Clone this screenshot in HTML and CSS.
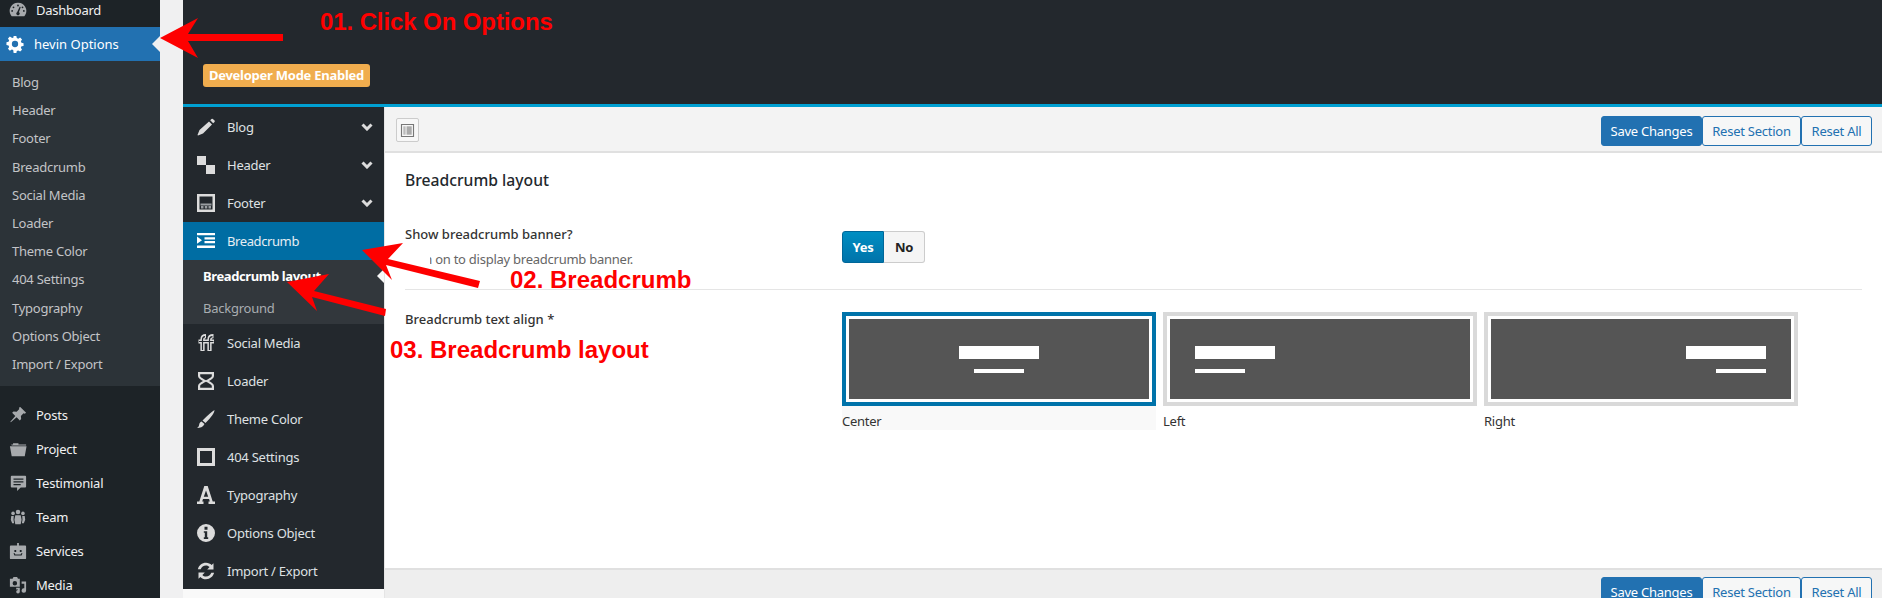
FILE: index.html
```html
<!DOCTYPE html>
<html lang="en">
<head>
<meta charset="utf-8">
<title>hevin Options</title>
<link rel="stylesheet" href="styles.css">
</head>
<body>
<div class="app">
  <aside class="wp">
    <div class="wp-row wp-dash">
      <svg class="wp-ico" viewBox="0 0 20 20"><path d="M10 2a9 9 0 0 0-8 13.500l1 1.500h14l1-1.500A9 9 0 0 0 10 2zm0 2a1 1 0 1 1 0 2 1 1 0 0 1 0-2zM5 6a1 1 0 1 1 0 2 1 1 0 0 1 0-2zm10 0a1 1 0 1 1 0 2 1 1 0 0 1 0-2zM3.500 10a1 1 0 1 1 0 2 1 1 0 0 1 0-2zm13 0a1 1 0 1 1 0 2 1 1 0 0 1 0-2zM13 7l-2 5.500a1.800 1.800 0 1 1-2 0L12 6z" fill-rule="evenodd"/></svg>
      <span>Dashboard</span>
    </div>
    <div class="wp-current">
      <svg class="wp-gear" viewBox="0 0 20 20"><path d="M8.500 1h3l.5 2.400 1.600.7 2.100-1.300 2.100 2.100-1.300 2.100.7 1.600 2.300.5v3l-2.300.5-.7 1.600 1.300 2.100-2.100 2.100-2.100-1.300-1.600.7-.5 2.400h-3L8 16.800l-1.600-.7-2.100 1.300-2.100-2.100 1.300-2.100-.7-1.600L.5 11.100v-3L2.800 7.600l.7-1.600-1.300-2.100 2.100-2.100 2.100 1.300L8 3.400zM10 6.500a3.500 3.500 0 1 0 0 7 3.500 3.500 0 0 0 0-7z" fill-rule="evenodd"/></svg>
      <span>hevin Options</span>
      <i class="notch"></i>
    </div>
    <ul class="wp-sub">
      <li>Blog</li><li>Header</li><li>Footer</li><li>Breadcrumb</li><li>Social Media</li><li>Loader</li><li>Theme Color</li><li>404 Settings</li><li>Typography</li><li>Options Object</li><li>Import / Export</li>
    </ul>
    <div class="wp-menu">
      <div class="wp-row">
        <svg class="wp-ico" viewBox="0 0 20 20"><path d="M12.500 1l6.500 6.500-1.500 1-1.300-.5-3 3 .3 3.500-1.500 1.500-3.500-3.500L2 18l-.5-.5 5.500-6.500L3.500 7.500 5 6l3.500.3 3-3-.5-1.300z"/></svg>
        <span>Posts</span>
      </div>
      <div class="wp-row">
        <svg class="wp-ico" viewBox="0 0 20 20"><path d="M2 5h2.500V3.500h6V5H19v1H3l-.5-1zM1 7h18.500l-2 11H3z"/></svg>
        <span>Project</span>
      </div>
      <div class="wp-row">
        <svg class="wp-ico" viewBox="0 0 20 20"><path d="M3 2h15a1 1 0 0 1 1 1v11a1 1 0 0 1-1 1h-5l-4 4v-4H3a1 1 0 0 1-1-1V3a1 1 0 0 1 1-1zm2 3v1.500h11V5zm0 3v1.500h11V8zm0 3v1.500h8V11z" fill-rule="evenodd"/></svg>
        <span>Testimonial</span>
      </div>
      <div class="wp-row">
        <svg class="wp-ico" viewBox="0 0 20 20"><circle cx="10" cy="4.500" r="2.500"/><circle cx="4.500" cy="6" r="2"/><circle cx="15.500" cy="6" r="2"/><path d="M7 8h6l1 5-1 5H7l-1-5zM2.500 9h2.800L5 13l.7 4H3.500L2 13zM14.700 9h2.800l.5 4-1.500 4h-2.200l.7-4z"/></svg>
        <span>Team</span>
      </div>
      <div class="wp-row">
        <svg class="wp-ico" viewBox="0 0 20 20"><path d="M9 1h2v3h7a1 1 0 0 1 1 1v13a1 1 0 0 1-1 1H2a1 1 0 0 1-1-1V5a1 1 0 0 1 1-1h7zM6 9v2h2V9zm6 0v2h2V9zm-7 3.500L6 15h8l1-2.500h-1.500L13 14H7l-.5-1.500z" fill-rule="evenodd"/></svg>
        <span>Services</span>
      </div>
      <div class="wp-row">
        <svg class="wp-ico" viewBox="0 0 20 20"><path d="M1 3h3l1-2h4l1 2h2v9H1zm5.500 2.500a2.500 2.500 0 1 0 0 5 2.500 2.500 0 0 0 0-5zM14 6h5v10a2.500 2.500 0 1 1-2-2.400V8.500h-3zM8 13h4v4.500a2 2 0 1 1-2-2V15H8z" fill-rule="evenodd"/></svg>
        <span>Media</span>
      </div>
    </div>
  </aside>

  <div class="gutter"></div>

  <section class="panel">
    <header class="panel-head">
      <span class="badge">Developer Mode Enabled</span>
    </header>
    <div class="panel-body">
      <nav class="rnav">
        <div class="rrow">
          <svg class="ric" viewBox="0 0 18 18"><path d="M12 3.500l3 3L6 15.500 1 17.500l-.5-.5 2-5zM13.200 2.300l1.300-1.300a1 1 0 0 1 1.400 0l1.600 1.600a1 1 0 0 1 0 1.400l-1.300 1.300z"/></svg>
          <span>Blog</span>
          <svg class="chev" viewBox="0 0 12 8"><path d="M1.500 1.500L6 6l4.500-4.500" /></svg>
        </div>
        <div class="rrow">
          <svg class="ric" viewBox="0 0 18 18"><path d="M0 0h9v9H0z"/><path d="M9 9h9v9H9z"/></svg>
          <span>Header</span>
          <svg class="chev" viewBox="0 0 12 8"><path d="M1.500 1.500L6 6l4.500-4.500" /></svg>
        </div>
        <div class="rrow">
          <svg class="ric" viewBox="0 0 18 18"><path d="M0 0h18v18H0zM2.500 2.500v13h13v-13z" fill-rule="evenodd"/><path d="M3.500 9.500h11v2h-11zM4 12h2.500v2.500H4zM7.800 12h2.500v2.500H7.800zM11.500 12H14v2.500h-2.500z" fill="#9a9ea2"/></svg>
          <span>Footer</span>
          <svg class="chev" viewBox="0 0 12 8"><path d="M1.500 1.500L6 6l4.500-4.500" /></svg>
        </div>
        <div class="rrow active">
          <svg class="ric" viewBox="0 0 18 18"><path d="M0 1h18v2.300H0zM7.500 5.200H18v2.200H7.500zM7.500 9H18v2.200H7.500zM0 13.500h18v2.400H0zM0 4.500l5 3.700-5 3.600z"/></svg>
          <span>Breadcrumb</span>
        </div>
        <div class="rsub">
          <div class="rsub-item on">Breadcrumb layout<i class="notch small"></i></div>
          <div class="rsub-item">Background</div>
        </div>
        <div class="rrow">
          <svg class="ric" viewBox="0 0 18 18"><g class="ff-out"><path d="M5.500 17V5.500Q5.500 2.200 9 2.200M1.500 7.500H9M12.500 17V5.500Q12.500 2.200 16.500 2.200M8.500 7.500h8.500"/></g><g class="ff-in"><path d="M5.500 16V5.500Q5.500 2.800 8 2.600M12.500 16V5.500Q12.500 2.800 15.500 2.600M2 7.500h7M9 7.500h7.500"/></g></svg>
          <span>Social Media</span>
        </div>
        <div class="rrow">
          <svg class="ric" viewBox="0 0 18 18"><path d="M1 0h16v4c0 2.200-2.700 3.600-5 5 2.300 1.400 5 2.800 5 5v4H1v-4c0-2.200 2.700-3.600 5-5C3.700 7.600 1 6.200 1 4zm2.200 2.200V4c0 1 3 2.900 5.800 4.300C11.800 6.900 14.800 5 14.800 4V2.200zM9 9.800C6.200 11.200 3.200 13 3.200 14v1.800h11.600V14C14.800 13 11.800 11.200 9 9.800z" fill-rule="evenodd"/></svg>
          <span>Loader</span>
        </div>
        <div class="rrow">
          <svg class="ric" viewBox="0 0 18 18"><path d="M17.500 0c-.3 3-2.500 6.500-9 13l-3-2.500C11 5 15 1.500 17.500 0zM4.500 11.500l3 2.500C6 17 3 18 0 18c1.500-1 2-2 2.200-3.500.2-1.500 1-2.500 2.300-3z"/></svg>
          <span>Theme Color</span>
        </div>
        <div class="rrow">
          <svg class="ric" viewBox="0 0 18 18"><path d="M0 0h18v18H0zM3 3v12h12V3z" fill-rule="evenodd"/></svg>
          <span>404 Settings</span>
        </div>
        <div class="rrow">
          <svg class="ric" viewBox="0 0 18 18"><path d="M7.300 0h3.400l5 15.500H18V18h-6.500v-2.500h1.300l-.7-2.500H6l-.8 2.500h1.300V18H0v-2.500h2.300zM9 4.500l-2.200 6.200h4.400z" fill-rule="evenodd"/></svg>
          <span>Typography</span>
        </div>
        <div class="rrow">
          <svg class="ric" viewBox="0 0 18 18"><path d="M9 0a9 9 0 1 1 0 18A9 9 0 0 1 9 0zM7.500 2.800v2.900h3V2.800zM6.800 7.200v1.600h1v4.500h-1v1.600h4.400v-1.600h-1V7.200z" fill-rule="evenodd"/></svg>
          <span>Options Object</span>
        </div>
        <div class="rrow">
          <svg class="ric" viewBox="0 0 18 18"><path d="M9 .8c2.300 0 4.200.9 5.600 2.300L16.500 1.200V7.500h-6.300l2.400-2.400C11.700 4.100 10.400 3.500 9 3.500 6.500 3.500 4.500 5 3.700 7.200H.9C1.800 3.500 5 .8 9 .8zM1.500 10.500h6.300l-2.400 2.400c.9 1 2.200 1.600 3.600 1.600 2.500 0 4.500-1.500 5.300-3.700h2.800c-.9 3.700-4.100 6.400-8.100 6.400-2.300 0-4.200-.9-5.600-2.300L1.500 16.800z"/></svg>
          <span>Import / Export</span>
        </div>
      </nav>

      <main class="main">
        <div class="bar">
          <span class="expand">
            <svg viewBox="0 0 16 16"><path d="M1 1h14v14H1zM2.200 2.200v11.600h11.600V2.200z" fill="#777" fill-rule="evenodd"/><path d="M3.500 3.500h2.500v9H3.500z" fill="#bbb"/><path d="M7 3.500h5.500v9H7z" fill="#aaa"/></svg>
          </span>
          <div class="btns">
            <button class="btn primary">Save Changes</button><button class="btn">Reset Section</button><button class="btn">Reset All</button>
          </div>
        </div>

        <div class="content">
          <h2 class="title">Breadcrumb layout</h2>
          <div class="field first">
            <div class="field-label">
              <div class="label">Show breadcrumb banner?</div>
              <div class="desc">Turn on to display breadcrumb banner.</div>
            </div>
            <div class="toggle"><span class="yes">Yes</span><span class="no">No</span></div>
          </div>
          <div class="field second">
            <div class="field-label">
              <div class="label">Breadcrumb text align *</div>
            </div>
            <div class="options">
              <div class="opt selected">
                <div class="frame"><div class="img center"><b></b><u></u></div></div>
                <div class="cap">Center</div>
              </div>
              <div class="opt">
                <div class="frame"><div class="img left"><b></b><u></u></div></div>
                <div class="cap">Left</div>
              </div>
              <div class="opt">
                <div class="frame"><div class="img right"><b></b><u></u></div></div>
                <div class="cap">Right</div>
              </div>
            </div>
          </div>
        </div>

        <div class="bar bottom">
          <div class="btns">
            <button class="btn primary">Save Changes</button><button class="btn">Reset Section</button><button class="btn">Reset All</button>
          </div>
        </div>
      </main>
    </div>
  </section>
</div>

<svg class="arrows" viewBox="0 0 1882 598">
  <path class="erase" d="M404 250h26v17h-26z"/>
  <path d="M160 38L198 18 188 34H283V41H188L198 58z"/>
  <path d="M362 250L403 243 388 259 480 281 478 288 386 265 392 280z"/>
  <path d="M287 282L329 274 314 291 386 309 385 316 312 297 317 311z"/>
</svg>
<div class="note n1">01. Click On Options</div>
<div class="note n2">02. Breadcrumb</div>
<div class="note n3">03. Breadcrumb layout</div>
</body>
</html>
```
FILE: styles.css
```css
* { box-sizing: border-box; }
html, body { margin: 0; height: 598px; overflow: hidden; }
body {
  position: relative;
  background: #f0f0f1;
  font-family: "Noto Sans", "Open Sans", sans-serif;
  font-size: 13px;
  letter-spacing: -0.25px;
  color: #23282d;
}
.app { display: flex; height: 598px; overflow: hidden; }

/* WordPress sidebar */
.wp { width: 160px; flex: none; background: #1d2327; color: #f0f0f1; }
.wp-row { display: flex; align-items: center; height: 34px; padding-left: 10px; gap: 9px; }
.wp-dash { height: 27px; padding-bottom: 7px; align-items: flex-end; }
.wp-dash span { line-height: 20px; }
.wp-ico { width: 18px; height: 18px; fill: #a7aaad; flex: none; margin-left: -1px; }
.wp-dash .wp-ico { margin-bottom: 1px; }
.wp-current { position: relative; display: flex; align-items: center; height: 34px; background: #2271b1; color: #fff; padding-left: 6px; gap: 10px; }
.wp-current span { letter-spacing: 0; }
.wp-gear { width: 18px; height: 18px; fill: #fff; }
.notch { position: absolute; right: 0; top: 50%; margin-top: -8px; width: 0; height: 0; border: 8px solid transparent; border-right-color: #f0f0f1; border-left-width: 0; }
.wp-sub { list-style: none; margin: 0 0 12px; padding: 7px 0 8px; background: #2c3338; color: #c3c4c7; }
.wp-sub li { height: 28.2px; line-height: 28px; padding-left: 12px; }

.gutter { width: 23px; flex: none; }

/* Options panel */
.panel { flex: 1; min-width: 0; display: flex; flex-direction: column; background: #fff; }
.panel-head { height: 107px; flex: none; background: #23282d; border-bottom: 3px solid #00a0d2; padding: 64px 0 0 20px; }
.badge { display: block; width: 167px; height: 23px; line-height: 23px; text-align: center; background: #f0ad4e; color: #fff; font-weight: 700; font-size: 13px; border-radius: 3px; white-space: nowrap; }
.panel-body { flex: 1; display: flex; min-height: 0; background: #f9f9f9; }

.rnav { width: 201px; flex: none; height: 482px; padding-top: 1px; background: #23282d; color: #dfe1e3; }
.rrow { display: flex; align-items: center; height: 38px; padding-left: 14px; position: relative; }
.rrow span { margin-left: 12px; }
.ric { width: 18px; height: 18px; fill: #dcdcdc; flex: none; }
.chev { position: absolute; left: 178px; top: 15px; width: 12px; height: 8px; fill: none; stroke: #dcdcdc; stroke-width: 3; }
.ff-out { fill: none; stroke: #dcdcdc; stroke-width: 4.200; }
.ff-in { fill: none; stroke: #23282d; stroke-width: 1.200; }
.rrow.active { background: #006da3; color: #e6eef3; }
.rrow.active span { letter-spacing: -0.4px; }
.rrow.active .ric { fill: #fff; }
.rsub { background: #32373c; height: 64px; }
.rsub-item { position: relative; height: 32px; line-height: 32px; padding-left: 20px; color: #a9adb1; }
.rsub-item.on { color: #fff; font-weight: 700; letter-spacing: -0.4px; }
.rsub-item .notch.small { margin-top: -7px; border-width: 7px; border-left-width: 0; border-right-color: #f9f9f9; }

.main { flex: 1; min-width: 0; background: #fff; display: flex; flex-direction: column; border-left: 1px solid #e5e5e5; }
.bar { height: 46px; flex: none; display: flex; align-items: flex-start; justify-content: space-between; background: #f3f3f3; border-bottom: 2px solid #e0e0e0; padding: 9px 10px 0 11px; }
.expand { width: 23px; height: 24px; margin-top: 2px; background: #f7f7f7; border: 1px solid #ccc; border-radius: 2px; display: flex; align-items: center; justify-content: center; }
.expand svg { width: 15px; height: 15px; }
.btns { display: flex; }
.btn { height: 30px; padding: 0; font: inherit; letter-spacing: inherit; font-size: 13px; color: #2271b1; background: #f6f7f7; border: 1px solid #2271b1; border-radius: 3px; width: 99px; }
.btn:last-child { width: 71px; }
.btn.primary { width: 101px; background: #2271b1; color: #fff; }

.content { flex: 1; min-height: 0; padding: 0 20px; }
.title { margin: 0; padding-top: 15px; height: 65px; line-height: 24px; font-size: 15.700px; font-weight: 500; letter-spacing: 0; color: #23282d; }
.field { display: flex; }
.field-label { width: 437px; flex: none; }
.label { font-weight: 500; line-height: 20px; color: #333; letter-spacing: 0; }
.desc { margin-top: 5px; line-height: 20px; color: #666; font-size: 13px; }
.first { height: 72px; padding-top: 6px; border-bottom: 1px solid #e5e5e5; }
.second { padding-top: 19px; }
.toggle { display: flex; height: 32px; margin-top: 7px; }
.toggle span { width: 42px; display: flex; align-items: center; justify-content: center; font-weight: 700; }
.toggle .no { width: 41px; }
.yes { background: linear-gradient(#008ec2, #0073aa); color: #fff; border: 1px solid #006799; border-radius: 3px 0 0 3px; }
.no { background: #f5f5f5; color: #222; border: 1px solid #ccc; border-left: 0; border-radius: 0 3px 3px 0; }
.options { display: flex; gap: 7px; margin-top: 3px; }
.opt { width: 314px; }
.opt.selected { background: #f9f9f9; }
.frame { border: 4px solid #d9d9d9; padding: 3px; background: #fff; }
.selected .frame { border-color: #0073aa; }
.img { height: 80px; background: #555; display: flex; flex-direction: column; padding: 27px 25px 0; }
.img b { display: block; width: 80px; height: 13px; background: #fff; }
.img u { display: block; width: 50px; height: 4px; background: #fff; margin-top: 10px; }
.img.center { align-items: center; }
.img.right { align-items: flex-end; }
.cap { height: 24px; line-height: 30px; color: #333; white-space: nowrap; }

.bottom { border-top: 2px solid #e0e0e0; border-bottom: 0; background: #eee; justify-content: flex-end; height: 30px; padding-top: 7px; }

/* Annotations on top of the screenshot */
.arrows { position: absolute; left: 0; top: 0; width: 1882px; height: 598px; fill: #fe0000; pointer-events: none; }
.arrows .erase { fill: #fff; }
.note { position: absolute; font-family: "Liberation Sans", Arial, sans-serif; font-weight: 700; font-size: 24px; letter-spacing: 0; line-height: 28px; color: #fe0000; white-space: nowrap; }
.n1 { left: 320px; top: 8px; letter-spacing: -0.1px; }
.n2 { left: 510px; top: 266px; }
.n3 { left: 390px; top: 336px; }
```
